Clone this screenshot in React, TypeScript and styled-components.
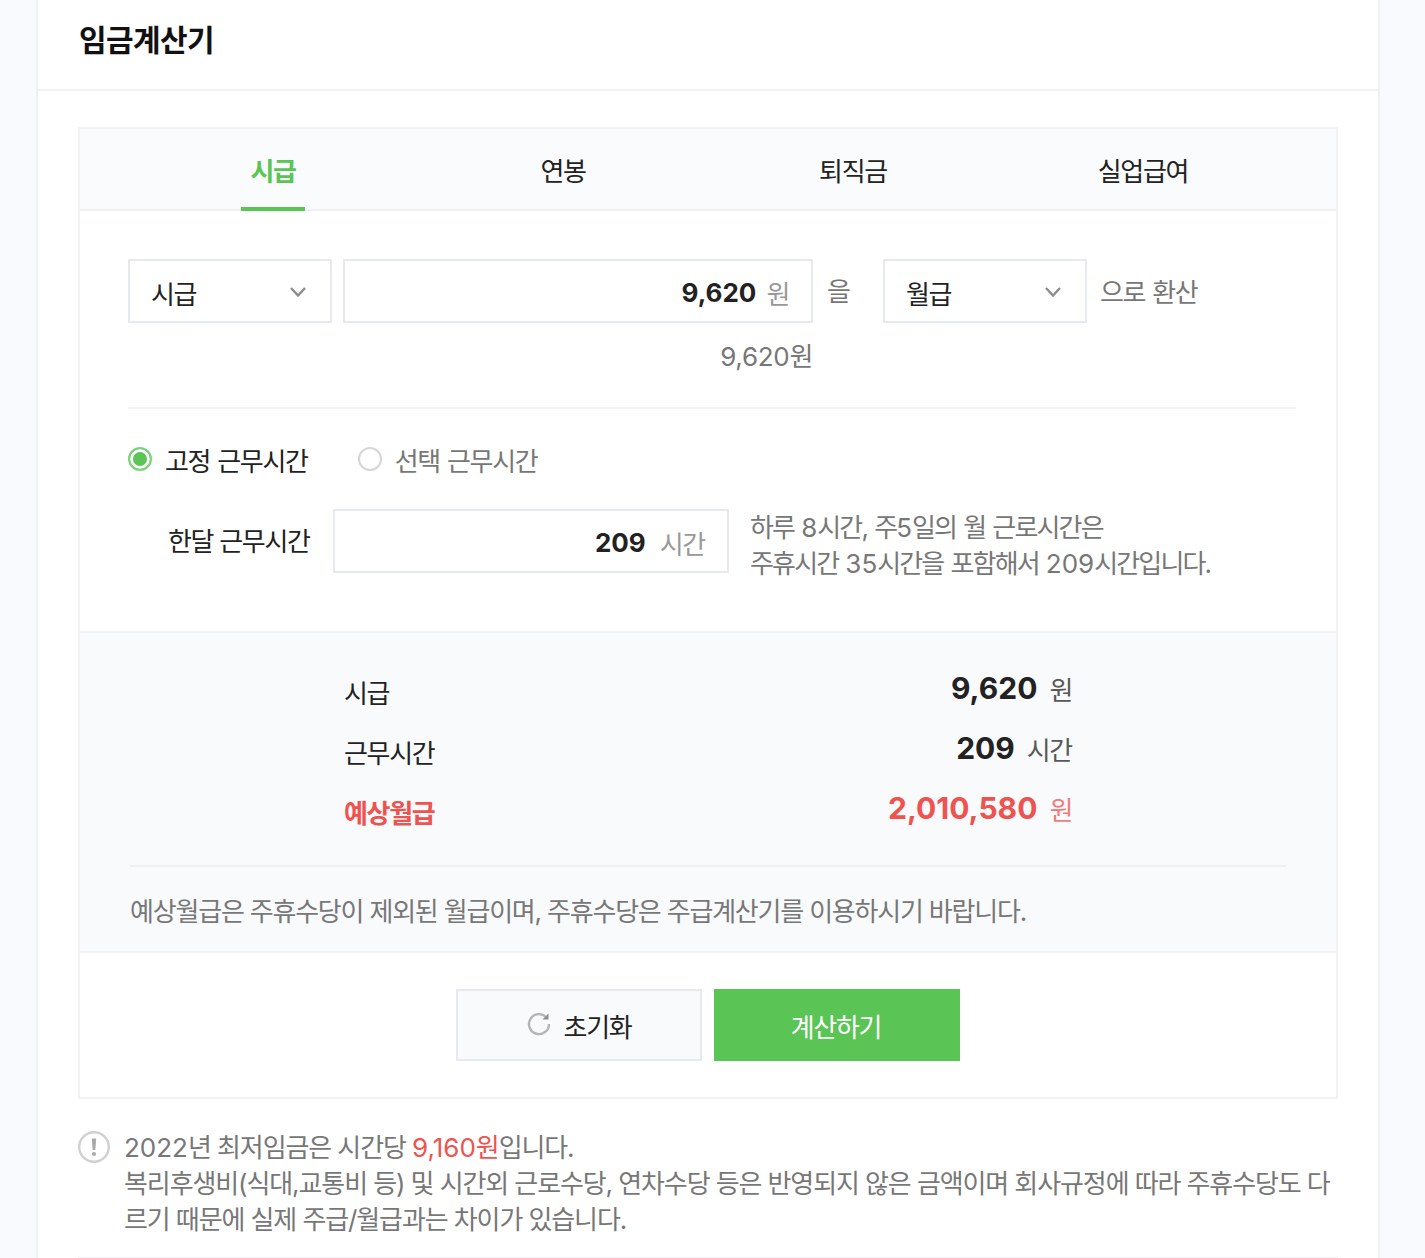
import React from "react"
import styled, { createGlobalStyle } from "styled-components"

const GlobalStyle = createGlobalStyle`
  html,
  body {
    margin: 0;
    height: 1258px;
    overflow: hidden;
    background: #f9fafd;
  }
  * {
    box-sizing: border-box;
  }
  body {
    font-family: Inter, "Noto Sans CJK KR", sans-serif;
    font-size: 26px;
    letter-spacing: -0.05em;
    color: #222222;
  }
`

const tabs = ["시급", "연봉", "퇴직금", "실업급여"]

const summary = [
  { label: "시급", value: "9,620", unit: "원", danger: false },
  { label: "근무시간", value: "209", unit: "시간", danger: false },
  { label: "예상월급", value: "2,010,580", unit: "원", danger: true },
]

const Chevron = () => (
  <svg width="18" height="12" viewBox="0 0 18 12" fill="none">
    <path d="M2 2l7 7.5L16 2" stroke="#8c8c8c" strokeWidth="2.4" />
  </svg>
)

const ResetIcon = () => (
  <svg width="24" height="24" viewBox="0 0 24 24" fill="none">
    <path
      d="M19.5 5.5A10 10 0 1 0 22 12"
      stroke="#b5b5b8"
      strokeWidth="2.4"
    />
    <path d="M21.5 1.5v6h-6z" fill="#8e8e91" />
  </svg>
)

const NoticeIcon = () => (
  <svg width="32" height="32" viewBox="0 0 32 32" fill="none">
    <circle cx="16" cy="16" r="14.8" stroke="#d0d0d0" strokeWidth="2.4" />
    <path d="M13.8 7.5h4.4l-.9 11.5h-2.6z" fill="#a8a8a8" />
    <circle cx="16" cy="23" r="2" fill="#a8a8a8" />
  </svg>
)

const App = () => {
  return (
    <>
      <GlobalStyle />
      <Panel>
        <Header>
          <Title>임금계산기</Title>
        </Header>
        <Body>
          <Calculator>
            <TabBar>
              {tabs.map((tab, i) => (
                <TabCell key={tab}>
                  <Tab $active={i === 0}>{tab}</Tab>
                </TabCell>
              ))}
            </TabBar>

            <Form>
              <ConvertRow>
                <Select>
                  시급
                  <Chevron />
                </Select>
                <AmountInput $width={470}>
                  <AmountValue>9,620</AmountValue>
                  <AmountUnit>원</AmountUnit>
                </AmountInput>
                <Connector>을</Connector>
                <Select>
                  월급
                  <Chevron />
                </Select>
                <ConvertLabel>으로 환산</ConvertLabel>
              </ConvertRow>
              <Caption>9,620원</Caption>
              <Divider />
              <RadioRow>
                <RadioLabel>
                  <Radio $checked />
                  고정 근무시간
                </RadioLabel>
                <RadioLabel $muted>
                  <Radio />
                  선택 근무시간
                </RadioLabel>
              </RadioRow>
              <HoursRow>
                <HoursLabel>한달 근무시간</HoursLabel>
                <AmountInput $width={396}>
                  <AmountValue>209</AmountValue>
                  <AmountUnit $wide>시간</AmountUnit>
                </AmountInput>
                <Hint>
                  하루 <Num>8</Num>시간, 주<Num>5</Num>일의 월 근로시간은
                  <br />
                  주휴시간 <Num>35</Num>시간을 포함해서 <Num>209</Num>시간입니다.
                </Hint>
              </HoursRow>
            </Form>

            <Summary>
              <SummaryRows>
                {summary.map((row) => (
                  <SummaryRow key={row.label} $danger={row.danger}>
                    <SummaryLabel $danger={row.danger}>{row.label}</SummaryLabel>
                    <SummaryValue>
                      <strong>{row.value}</strong>
                      <span>{row.unit}</span>
                    </SummaryValue>
                  </SummaryRow>
                ))}
              </SummaryRows>
              <SummaryNote>
                예상월급은 주휴수당이 제외된 월급이며, 주휴수당은 주급계산기를 이용하시기 바랍니다.
              </SummaryNote>
            </Summary>

            <Actions>
              <ResetButton>
                <ResetIcon />
                초기화
              </ResetButton>
              <SubmitButton>계산하기</SubmitButton>
            </Actions>
          </Calculator>

          <Notice>
            <NoticeIconWrap>
              <NoticeIcon />
            </NoticeIconWrap>
            <NoticeText>
              <Num>2022</Num>년 최저임금은 시간당 <em><Num>9,160</Num>원</em>입니다.
              <br />
              복리후생비(식대,교통비 등) 및 시간외 근로수당, 연차수당 등은 반영되지 않은 금액이며 회사규정에 따라 주휴수당도 다르기 때문에 실제 주급/월급과는 차이가 있습니다.
            </NoticeText>
          </Notice>
          <FooterLine />
        </Body>
      </Panel>
    </>
  )
}

export default App

const Panel = styled.div`
  width: 1344px;
  height: 1258px;
  margin-left: 36px;
  background: #ffffff;
  border-left: 2px solid #eef0f4;
  border-right: 2px solid #eef0f4;
`
const Header = styled.header`
  display: flex;
  align-items: center;
  height: 91px;
  padding: 0 0 13px 41px;
  border-bottom: 2px solid #f1f2f5;
`
const Title = styled.h1`
  margin: 0;
  font-size: 30px;
  font-weight: 700;
  letter-spacing: -0.02em;
  color: #111111;
`
const Body = styled.div`
  padding: 36px 40px 0;
`
const Calculator = styled.section`
  border: 2px solid #f1f2f5;
`
const Num = styled.span`
  letter-spacing: 0;
`
const TabBar = styled.nav`
  display: grid;
  grid-template-columns: repeat(4, 290px);
  height: 82px;
  padding: 0 48px;
  background: #fafbfd;
  border-bottom: 2px solid #eef0f4;
`
const TabCell = styled.div`
  display: flex;
  justify-content: center;
  height: 82px;
`
const Tab = styled.div<{ $active?: boolean }>`
  display: flex;
  align-items: center;
  height: 82px;
  padding: 2px 9px 0;
  font-weight: ${(p) => (p.$active ? 700 : 400)};
  color: ${(p) => (p.$active ? "#5ac455" : "#222222")};
  border-bottom: 4px solid ${(p) => (p.$active ? "#5ac455" : "transparent")};
`
const Form = styled.div`
  height: 420px;
  padding: 48px 40px 0 48px;
`
const ConvertRow = styled.div`
  display: flex;
  align-items: center;
  height: 64px;
`
const Select = styled.div`
  display: flex;
  align-items: center;
  justify-content: space-between;
  width: 204px;
  height: 64px;
  padding: 2px 23px 0 21px;
  border: 2px solid #e6e9f0;
  background: #ffffff;

  svg {
    margin-top: -1px;
  }
`
const AmountInput = styled.div<{ $width: number }>`
  display: flex;
  align-items: center;
  justify-content: flex-end;
  flex: none;
  width: ${(p) => p.$width}px;
  height: 64px;
  padding: 3px 22px 0 0;
  border: 2px solid #e6e9f0;
  background: #ffffff;

  ${Select} + & {
    margin-left: 11px;
  }
`
const AmountValue = styled.span`
  font-size: 26px;
  font-weight: 700;
  letter-spacing: 0;
`
const AmountUnit = styled.span<{ $wide?: boolean }>`
  margin-left: ${(p) => (p.$wide ? 14 : 10)}px;
  font-size: 26px;
  color: #999999;
`
const Connector = styled.span`
  width: 70px;
  padding: 0 0 4px 14px;
  color: #777777;
`
const ConvertLabel = styled.span`
  margin-left: 13px;
  padding-bottom: 2px;
  word-spacing: 1px;
  color: #777777;
`
const Caption = styled.div`
  width: 685px;
  margin-top: 16px;
  line-height: 36px;
  text-align: right;
  letter-spacing: -0.3px;
  color: #777777;
`
const Divider = styled.hr`
  height: 2px;
  margin: 32px 0 0;
  border: 0;
  background: #f3f4f7;
`
const RadioRow = styled.div`
  display: flex;
  gap: 50px;
  height: 36px;
  margin-top: 33px;
`
const RadioLabel = styled.label<{ $muted?: boolean }>`
  display: flex;
  align-items: center;
  gap: 13px;
  padding-top: 4px;
  line-height: 32px;
  word-spacing: 1px;
  color: ${(p) => (p.$muted ? "#777777" : "#222222")};
`
const Radio = styled.span<{ $checked?: boolean }>`
  flex: none;
  width: 24px;
  height: 24px;
  margin-top: -6px;
  border-radius: 50%;
  border: 2px solid ${(p) => (p.$checked ? "#7dd37a" : "#d6d6d6")};
  background: ${(p) => (p.$checked ? "#5ac455" : "#ffffff")};
  box-shadow: ${(p) => (p.$checked ? "inset 0 0 0 3px #ffffff" : "none")};
`
const HoursRow = styled.div`
  display: flex;
  align-items: flex-start;
  height: 72px;
  margin-top: 31px;
  padding-left: 40px;
`
const HoursLabel = styled.span`
  flex: none;
  width: 165px;
  line-height: 66px;
`
const Hint = styled.p`
  margin: 0 0 0 21px;
  padding-top: 1px;
  line-height: 36px;
  letter-spacing: -1.85px;
  word-spacing: 1.6px;
  white-space: nowrap;
  color: #777777;
`
const Summary = styled.section`
  height: 322px;
  background: #f9fafc;
  border-top: 2px solid #f1f2f5;
  border-bottom: 2px solid #f1f2f5;
  padding-top: 30px;
`
const SummaryRows = styled.div`
  margin: 0 50px;
  padding: 0 214px 22px 214px;
  border-bottom: 2px solid #eef0f4;
`
const SummaryRow = styled.div<{ $danger?: boolean }>`
  display: flex;
  align-items: center;
  justify-content: space-between;
  height: 60px;
  color: ${(p) => (p.$danger ? "#ee5350" : "#222222")};
`
const SummaryLabel = styled.span<{ $danger?: boolean }>`
  padding-bottom: 3px;
  font-weight: ${(p) => (p.$danger ? 700 : 400)};
`
const SummaryValue = styled.span`
  display: flex;
  align-items: center;
  gap: 12px;
  margin-top: -10px;

  strong {
    font-size: 30px;
    font-weight: 700;
    letter-spacing: 0;
  }

  span {
    font-size: 26px;
    opacity: 0.75;
  }
`
const SummaryNote = styled.p`
  margin: 26px 0 0 50px;
  padding-top: 1px;
  line-height: 36px;
  letter-spacing: -1.2px;
  color: #777777;
`
const Actions = styled.div`
  display: flex;
  justify-content: center;
  gap: 12px;
  padding: 36px 0;
`
const ResetButton = styled.button`
  display: flex;
  align-items: center;
  justify-content: center;
  gap: 13px;
  width: 246px;
  height: 72px;
  padding: 1px 0 0;
  font: inherit;
  letter-spacing: inherit;
  color: #222222;
  background: #f9fafc;
  border: 2px solid #e8e9ef;

  svg {
    margin-top: -3px;
  }
`
const SubmitButton = styled.button`
  width: 246px;
  height: 72px;
  padding: 1px 2px 0 0;
  font: inherit;
  letter-spacing: inherit;
  color: #ffffff;
  background: #5ac455;
  border: 0;
`
const Notice = styled.div`
  display: flex;
  gap: 14px;
  margin-top: 30px;
`
const NoticeIconWrap = styled.span`
  flex: none;
  height: 32px;
  margin-top: 2px;
`
const NoticeText = styled.p`
  margin: 0;
  padding-top: 1px;
  line-height: 36px;
  letter-spacing: -1.1px;
  color: #777777;

  em {
    font-style: normal;
    color: #ee5350;
  }
`
const FooterLine = styled.div`
  height: 2px;
  margin-top: 19px;
  background: #f1f2f5;
`
